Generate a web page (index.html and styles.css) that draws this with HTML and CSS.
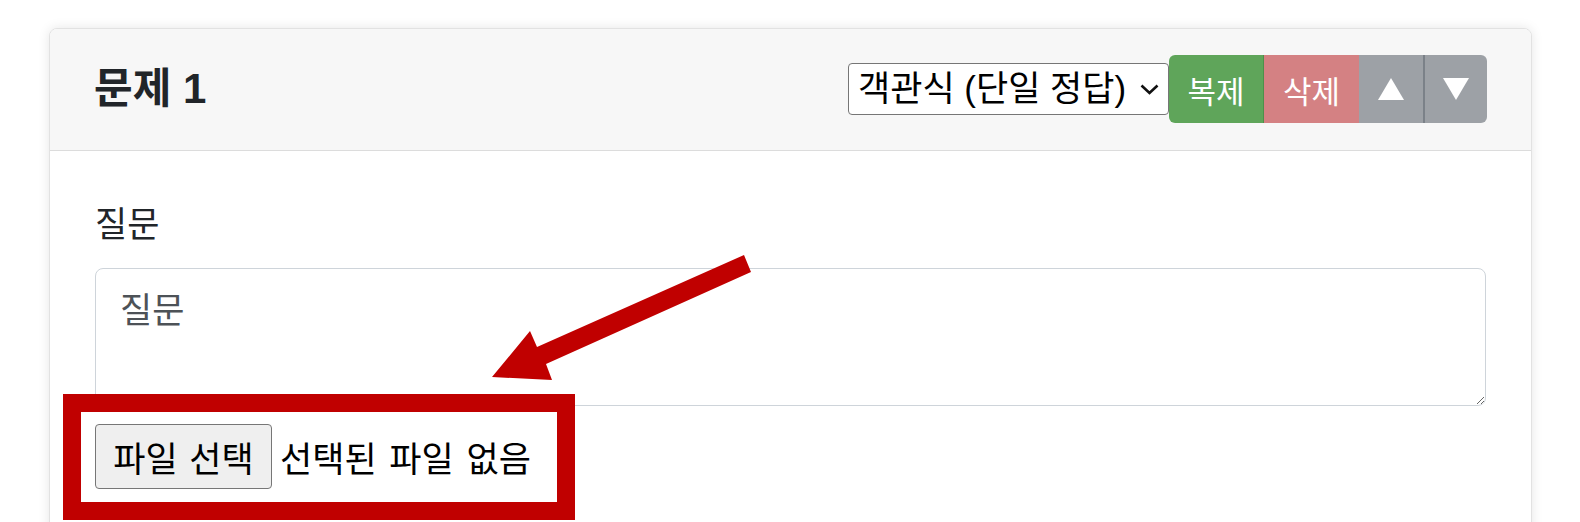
FILE: index.html
```html
<!DOCTYPE html>
<html lang="ko">
<head>
<meta charset="utf-8">
<title>문제 1</title>
<link rel="stylesheet" href="styles.css">
</head>
<body>
<div class="page">
  <div class="card">
    <div class="card-header">
      <h5 class="card-title">문제 1</h5>
      <div class="controls">
        <div class="select">
          <span class="select-text">객관식 (단일 정답)</span>
          <svg class="chevron" width="19" height="11" viewBox="0 0 19 11"><path d="M1.5 1.5 L9.5 9 L17.5 1.5" fill="none" stroke="#111" stroke-width="2.6"/></svg>
        </div>
        <div class="btn-group">
          <button class="btn btn-copy">복제</button>
          <button class="btn btn-delete">삭제</button>
          <button class="btn btn-move"><svg width="26" height="22" viewBox="0 0 26 22"><polygon points="13,0 26,22 0,22" fill="#fff"/></svg></button>
          <button class="btn btn-move btn-down"><svg width="26" height="22" viewBox="0 0 26 22"><polygon points="0,0 26,0 13,22" fill="#fff"/></svg></button>
        </div>
      </div>
    </div>
    <div class="card-body">
      <label class="field-label">질문</label>
      <textarea class="question" placeholder="질문"></textarea>
      <div class="file-row">
        <button class="file-btn">파일 선택</button>
        <span class="file-name">선택된 파일 없음</span>
      </div>
    </div>
  </div>
</div>
<div class="highlight-box"></div>
<svg class="arrow" width="1580" height="522" viewBox="0 0 1580 522">
  <polygon points="492,377 530,331 537,347 744,255 751,272 546,364 552,380" fill="#c00000"/>
</svg>
</body>
</html>
```

FILE: styles.css
```css
html, body {
  margin: 0;
  padding: 0;
  background: #ffffff;
  overflow: hidden;
}
body {
  position: relative;
  width: 1580px;
  height: 522px;
  font-family: "Liberation Sans", "Noto Sans CJK KR", sans-serif;
  color: #212529;
}
.page {
  padding: 28px 0 0 49px;
}
.card {
  width: 1483px;
  min-height: 600px;
  box-sizing: border-box;
  border: 1px solid #e2e2e2;
  border-radius: 8px;
  box-shadow: 0 0 12px rgba(0, 0, 0, 0.10);
  background: #fff;
  overflow: hidden;
}
.card-header {
  display: flex;
  align-items: center;
  padding: 26px 44px 27px 44px;
  background: #f7f7f7;
  border-bottom: 1px solid #dcdcdc;
}
.card-title {
  margin: 0;
  font-size: 42px;
  line-height: 48px;
  font-weight: 700;
  color: #212529;
}
.controls {
  margin-left: auto;
  display: flex;
  align-items: center;
}
.select {
  display: flex;
  align-items: center;
  box-sizing: border-box;
  width: 321px;
  height: 52px;
  padding: 0 9px 0 9px;
  background: #fff;
  border: 1px solid #767676;
  border-radius: 4px;
  font-size: 35px;
  color: #000;
}
.select-text {
  flex: 1;
  white-space: nowrap;
  line-height: 48px;
}
.chevron {
  flex: none;
}
.btn-group {
  display: flex;
  height: 68px;
  border-radius: 6px;
  overflow: hidden;
}
.btn {
  box-sizing: border-box;
  height: 68px;
  border: 0;
  margin: 0;
  padding: 0;
  font-family: inherit;
  font-size: 31px;
  color: #fff;
  display: flex;
  align-items: center;
  justify-content: center;
}
.btn-copy {
  width: 95px;
  background: #5fa55a;
  border-right: 1px solid #4f8f4a;
}
.btn-delete {
  width: 95px;
  background: #d48183;
}
.btn-move {
  width: 64px;
  background: #9da1a6;
}
.btn-down {
  border-left: 2px solid #7b8188;
}
.card-body {
  padding: 50px 45px 0 45px;
  display: flex;
  flex-direction: column;
}
.field-label {
  font-size: 35px;
  line-height: 48px;
  margin-bottom: 19px;
  color: #212529;
}
.question {
  box-sizing: border-box;
  width: 100%;
  height: 138px;
  margin: 0;
  padding: 18px 24px 12px;
  border: 1px solid #ced4da;
  border-radius: 8px;
  font-family: inherit;
  font-size: 35px;
  line-height: 48px;
  color: #495057;
  resize: vertical;
}
.question::placeholder {
  color: #4d5257;
}
.file-row {
  display: flex;
  align-items: center;
  margin-top: 18px;
}
.file-btn {
  box-sizing: border-box;
  width: 177px;
  height: 65px;
  margin: 0;
  padding: 0;
  background: #efefef;
  border: 1px solid #767676;
  border-radius: 4px;
  font-family: inherit;
  font-size: 35px;
  word-spacing: 2px;
  color: #000;
}
.file-name {
  margin-left: 8px;
  font-size: 35px;
  word-spacing: 3px;
  color: #000;
}
.highlight-box {
  position: absolute;
  left: 63px;
  top: 394px;
  width: 512px;
  height: 126px;
  box-sizing: border-box;
  border: 18px solid #c00000;
}
.arrow {
  position: absolute;
  left: 0;
  top: 0;
  pointer-events: none;
}
```
